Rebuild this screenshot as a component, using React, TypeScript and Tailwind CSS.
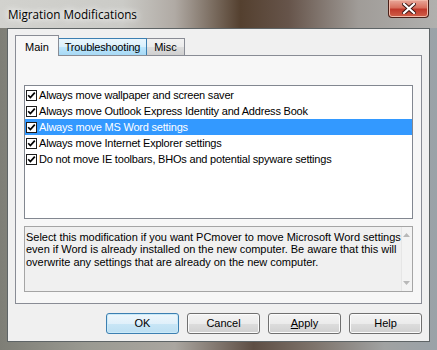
import React from "react";

const items = [
  "Always move wallpaper and screen saver",
  "Always move Outlook Express Identity and Address Book",
  "Always move MS Word settings",
  "Always move Internet Explorer settings",
  "Do not move IE toolbars, BHOs and potential spyware settings",
];

const selected = 2;

function CheckBox() {
  return (
    <span className="flex h-[11px] w-[11px] shrink-0 items-center justify-center border border-[#1c1c1c] bg-white">
      <svg width="9" height="9" viewBox="0 0 9 9">
        <path d="M1.2 4.2 L3.4 6.6 L7.8 1.6" stroke="#000" strokeWidth="1.7" fill="none" />
      </svg>
    </span>
  );
}

function Button({ children, primary }: { children: React.ReactNode; primary?: boolean }) {
  return (
    <button
      type="button"
      className={
        primary
          ? "flex h-[21px] w-[73px] items-center justify-center rounded-[3px] border border-[#3c7fb1] bg-[linear-gradient(180deg,#eef7fc_0%,#e0f0fa_50%,#c9e6f6_51%,#bcdff2_100%)] text-[11px] text-black shadow-[inset_0_0_0_1px_#cbeaf8]"
          : "flex h-[21px] w-[73px] items-center justify-center rounded-[3px] border border-[#707070] bg-[linear-gradient(180deg,#f4f4f4_0%,#ebebeb_50%,#dddddd_51%,#d0d0d0_100%)] text-[11px] text-black shadow-[inset_0_0_0_1px_#fbfbfb]"
      }
    >
      {children}
    </button>
  );
}

export default function App() {
  return (
    <div className="h-[350px] w-[437px] overflow-hidden bg-[linear-gradient(90deg,#7e7e76_0%,#9a9a92_20%,#aaa6a0_40%,#5e4e44_58%,#7e746c_72%,#a0a2a2_88%,#9aa2a8_100%)] font-['Liberation_Sans',Arial,sans-serif] text-[11px] text-black">
      {/* title bar */}
      <div className="flex h-[28px] items-start bg-[linear-gradient(90deg,#d2d2ce_0%,#cbcbc7_28%,#b0aaa4_40%,#54402f_55%,#66544a_66%,#a09c98_82%,#b0b0ae_100%)]">
        <span className="ml-[8px] mt-[6px] font-['Open_Sans',sans-serif] text-[11.7px] leading-[16px] text-black [text-shadow:0_0_6px_#ffffff,0_0_10px_#ffffff]">
          Migration Modifications
        </span>
        <div className="ml-auto mr-[8px] flex h-[18px] w-[41px] items-center justify-center rounded-b-[4px] border border-t-0 border-[#4a2018] bg-[linear-gradient(180deg,#e9a89a_0%,#d8705e_45%,#c0392b_55%,#d0604a_100%)] shadow-[inset_0_0_0_1px_#f0b8a8]">
          <svg width="14" height="11" viewBox="0 0 14 11">
            <path d="M2 1 L12 10 M12 1 L2 10" stroke="#3a1410" strokeWidth="4" strokeLinecap="square" />
            <path d="M2 1 L12 10 M12 1 L2 10" stroke="#ffffff" strokeWidth="2.2" strokeLinecap="square" />
          </svg>
        </div>
      </div>

      {/* client area */}
      <div className="ml-[7px] flex h-[314px] w-[423px] flex-col border border-[#5e6466] bg-[#f0f0f0]">
        {/* tabs */}
        <div className="relative z-10 ml-[7px] mt-[6px] flex h-[21px] items-end">
          <div className="flex h-[21px] w-[44px] items-start justify-center border border-b-0 border-[#898c95] bg-[#f7f7f7] pt-[3px]">
            Main
          </div>
          <div className="mb-px flex h-[17px] w-[88px] items-center justify-center border border-l-0 border-b-0 border-[#3c7fb1] bg-[linear-gradient(180deg,#eaf6fd_0%,#d9f0fc_50%,#bee6fd_51%,#a7d9f5_100%)] tracking-[-0.2px]">
            Troubleshooting
          </div>
          <div className="mb-px flex h-[17px] w-[38px] items-center justify-center border border-l-0 border-b-0 border-[#898c95] bg-[linear-gradient(180deg,#f2f2f2_0%,#ebebeb_50%,#dddddd_51%,#cfcfcf_100%)]">
            Misc
          </div>
        </div>

        {/* tab panel */}
        <div className="-mt-px ml-[7px] flex h-[249px] w-[407px] flex-col border border-[#898c95] bg-[#f7f7f7] pl-[8px] pt-[29px]">
          <div className="flex h-[134px] w-[389px] flex-col border border-[#828790] bg-white pt-px">
            {items.map((t, i) => (
              <div
                key={t}
                className={
                  i === selected
                    ? "flex h-[16px] items-center gap-[2px] bg-[#3399ff] pl-px text-white"
                    : "flex h-[16px] items-center gap-[2px] pl-px text-black"
                }
              >
                <CheckBox />
                <span className="whitespace-nowrap leading-[16px] tracking-[-0.2px]">{t}</span>
              </div>
            ))}
          </div>

          <div className="mt-[7px] flex h-[66px] w-[389px] border border-[#a5a5a5] bg-[#f0f0f0]">
            <div className="flex-1 pl-px pt-[4px] leading-[12.3px] whitespace-nowrap tracking-[-0.03px]">
              <div>Select this modification if you want PCmover to move Microsoft Word settings</div>
              <div>even if Word is already installed on the new computer. Be aware that this will</div>
              <div>overwrite any settings that are already on the new computer.</div>
            </div>
            <div className="flex w-[17px] flex-col items-center justify-between border-l border-[#e6e6e6] bg-[#f3f3f3] py-[6px]">
              <svg width="7" height="4" viewBox="0 0 7 4">
                <path d="M0 4 L3.5 0 L7 4 Z" fill="#b8b8b8" />
              </svg>
              <svg width="7" height="4" viewBox="0 0 7 4">
                <path d="M0 0 L3.5 4 L7 0 Z" fill="#b8b8b8" />
              </svg>
            </div>
          </div>
        </div>

        {/* buttons */}
        <div className="mt-[9px] flex justify-end gap-[8px] pr-[7px]">
          <Button primary>OK</Button>
          <Button>Cancel</Button>
          <Button>
            <span>
              <span className="underline">A</span>pply
            </span>
          </Button>
          <Button>Help</Button>
        </div>
      </div>
    </div>
  );
}
